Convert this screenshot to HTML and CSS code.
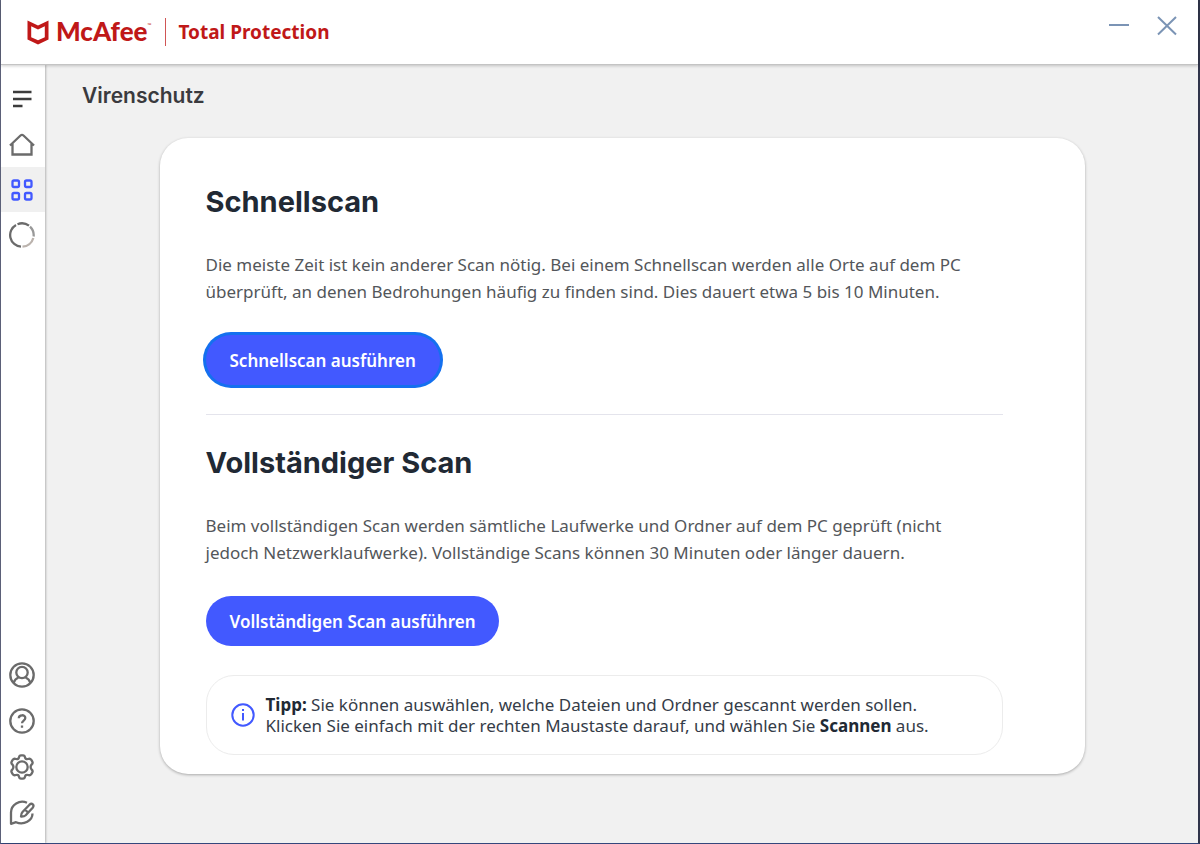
FILE: index.html
```html
<!DOCTYPE html>
<html lang="de">
<head>
    <meta charset="UTF-8">
    <meta name="viewport" content="width=device-width, initial-scale=1.0">
    <title>McAfee Total Protection</title>
    <link rel="stylesheet" href="styles.css">
</head>
<body>
    <div class="window">
        <header class="header">
            <div class="brand">
                <svg class="brand-icon" width="22" height="25" viewBox="0 0 22 25" aria-hidden="true">
                    <path fill="#c01818" d="M.5.500L11 5.500 21.500.5V19.500L11 24.500.5 19.500zM4.200 6.300v11l6.800 3 6.800-3v-11L11 9.500z"/>
                </svg>
                <span class="brand-name">McAfee</span><span class="brand-tm">™</span>
                <span class="product">Total Protection</span>
            </div>
            <div class="window-controls">
                <button type="button" aria-label="Minimieren">
                    <svg width="22" height="22" viewBox="0 0 22 22"><path d="M1 10h20"/></svg>
                </button>
                <button type="button" aria-label="Schließen">
                    <svg width="22" height="22" viewBox="0 0 22 22"><path d="M2 2l18 17.500M20 2L2 19.500"/></svg>
                </button>
            </div>
        </header>

        <div class="content">
            <nav class="sidebar">
                <div class="nav-top">
                    <button type="button" class="nav-item" aria-label="Menü">
                        <svg class="dark" width="26" height="26" viewBox="0 0 26 26"><path d="M4 5h18.500M4 12h18.500M4 19h9.500"/></svg>
                    </button>
                    <a href="#" class="nav-item" aria-label="Startseite">
                        <svg width="28" height="26" viewBox="0 0 28 26"><path d="M2 13.500L12.500 3.500q1.500-1.300 3 0L26 13.500M4.500 11.500v11h19v-11"/></svg>
                    </a>
                    <a href="#" class="nav-item active" aria-label="Mein Schutz">
                        <svg width="26" height="26" viewBox="0 0 26 26">
                            <rect x="3.500" y="3.500" width="6.500" height="6.500" rx="1.500"/>
                            <rect x="16" y="3.500" width="6.500" height="6.500" rx="1.500"/>
                            <rect x="3.500" y="16" width="6.500" height="6.500" rx="1.500"/>
                            <rect x="16" y="16" width="6.500" height="6.500" rx="1.500"/>
                        </svg>
                    </a>
                    <a href="#" class="nav-item" aria-label="Schutzwert">
                        <svg width="26" height="26" viewBox="0 0 26 26">
                            <path d="M8.500 2.200A11.700 11.700 0 0 1 20 3.700"/>
                            <path stroke="#999" d="M21 4.600A11.700 11.700 0 0 1 24.600 14.500"/>
                            <path stroke="#bbb3ad" d="M24.300 16A11.700 11.700 0 0 1 13.500 24.700"/>
                            <path d="M12 24.700A11.700 11.700 0 0 1 7 2.900"/>
                        </svg>
                    </a>
                </div>
                <div class="nav-bottom">
                    <a href="#" class="nav-item" aria-label="Konto">
                        <svg width="26" height="26" viewBox="0 0 26 26">
                            <circle cx="13" cy="13" r="11.700"/>
                            <circle cx="13" cy="10.500" r="5.700"/>
                            <path d="M4.500 21Q6 16.800 9.500 15.500M21.500 21Q20 16.800 16.500 15.500"/>
                        </svg>
                    </a>
                    <a href="#" class="nav-item" aria-label="Hilfe">
                        <svg width="26" height="26" viewBox="0 0 26 26">
                            <circle cx="13" cy="13" r="11.700"/>
                            <path d="M9.800 10.300c0-4 6.500-4 6.500-.2 0 2.500-3.300 2.500-3.300 5.200M13 17.500v2.200"/>
                        </svg>
                    </a>
                    <a href="#" class="nav-item" aria-label="Einstellungen">
                        <svg width="26" height="26" viewBox="0 0 26 26">
                            <circle cx="13" cy="13" r="5.700"/>
                            <path stroke-linejoin="round" d="M10 3.300Q10.300 1.300 12 1.300h2q1.700 0 2 2 .4 2.300 3 1.700 2.200-.8 3.300.8l1 1.800q.9 1.700-.7 2.900-2 2.500 0 5 1.600 1.200.7 2.900l-1 1.800q-1.100 1.600-3.300.8-2.600-.6-3 1.700-.3 2-2 2h-2q-1.700 0-2-2-.4-2.300-3-1.700-2.200.8-3.300-.8l-1-1.800q-.9-1.700.7-2.900 2-2.500 0-5-1.600-1.200-.7-2.900l1-1.800Q4.800 4.200 7 5q2.600.6 3-1.700z"/>
                        </svg>
                    </a>
                    <a href="#" class="nav-item" aria-label="Feedback">
                        <svg width="26" height="26" viewBox="0 0 26 26">
                            <path stroke-linejoin="round" d="M18 2.700C10.500-.5 2 4.500 2 12.500v11.300l5-1.600c8 3.300 16.500-1.700 16.500-8.700"/>
                            <path stroke-linejoin="round" d="M13.500 12l7-7.300c2.500-2.200 5.200.5 3.200 3l-7 7.500c-1.500 1.500-3.500 1.300-4.700 1.300 0-1.500 0-3 1.500-4.500zM16 9.500l3.200 3.200"/>
                        </svg>
                    </a>
                </div>
            </nav>

            <main class="main">
                <h1>Virenschutz</h1>
                <div class="card">
                    <section class="scan">
                        <h2>Schnellscan</h2>
                        <p>Die meiste Zeit ist kein anderer Scan nötig. Bei einem Schnellscan werden alle Orte auf dem PC<br>
                        überprüft, an denen Bedrohungen häufig zu finden sind. Dies dauert etwa 5 bis 10 Minuten.</p>
                        <button type="button" class="scan-btn focused">Schnellscan ausführen</button>
                    </section>
                    <hr>
                    <section class="scan">
                        <h2>Vollständiger Scan</h2>
                        <p>Beim vollständigen Scan werden sämtliche Laufwerke und Ordner auf dem PC geprüft (nicht<br>
                        jedoch Netzwerklaufwerke). Vollständige Scans können 30 Minuten oder länger dauern.</p>
                        <button type="button" class="scan-btn">Vollständigen Scan ausführen</button>
                    </section>
                    <div class="tip">
                        <svg width="24" height="24" viewBox="0 0 24 24" aria-hidden="true">
                            <circle cx="12" cy="12" r="10.700"/>
                            <path d="M12 10v7.500M12 6v2"/>
                        </svg>
                        <div><b>Tipp:</b> Sie können auswählen, welche Dateien und Ordner gescannt werden sollen.<br>
                        Klicken Sie einfach mit der rechten Maustaste darauf, und wählen Sie <b>Scannen</b> aus.</div>
                    </div>
                </div>
            </main>
        </div>
    </div>
</body>
</html>
```
FILE: styles.css
```css
* {
    box-sizing: border-box;
}
body {
    margin: 0;
    font-family: "Noto Sans", "Open Sans", sans-serif;
    font-size: 17px;
    color: #53565a;
    background: #f1f1f1;
}
button {
    font-family: inherit;
    border: none;
    background: none;
    padding: 0;
    cursor: pointer;
}
svg {
    display: block;
    flex-shrink: 0;
    fill: none;
}
.window {
    display: flex;
    flex-direction: column;
    min-height: 100vh;
    border-left: 1px solid #5d627a;
    border-right: 2px solid #30344a;
    border-bottom: 1px solid #34477c;
}

/* Header */
.header {
    display: flex;
    justify-content: space-between;
    height: 65px;
    padding: 0 20px 0 26px;
    background: #fff;
    border-bottom: 1px solid #c4c4c4;
    box-shadow: 0 1px 3px rgba(0, 0, 0, 0.2);
    position: relative;
}
.brand {
    display: flex;
    align-items: center;
    color: #c01818;
}
.brand-icon {
    margin-right: 7px;
}
.brand-name {
    font-family: Lato, sans-serif;
    font-size: 26px;
    font-weight: 900;
    line-height: 28px;
    padding-bottom: 3px;
}
.brand-tm {
    font-size: 5px;
    line-height: 20px;
    align-self: flex-start;
    margin-top: 15px;
}
.product {
    margin-left: 14px;
    padding-left: 12px;
    border-left: 1px solid #d05555;
    font-size: 19px;
    font-weight: 700;
    line-height: 28px;
}
.window-controls {
    display: flex;
    align-items: flex-start;
    gap: 26px;
    padding-top: 15px;
}
.window-controls svg {
    stroke: #7b94b5;
    stroke-width: 2;
}

/* Sidebar */
.content {
    display: flex;
    flex: 1;
}
.sidebar {
    display: flex;
    flex-direction: column;
    justify-content: space-between;
    width: 44px;
    padding: 12px 0 8px;
    background: #fff;
    box-shadow: 1px 0 2px rgba(0, 0, 0, 0.25);
}
.nav-bottom {
    display: grid;
    gap: 1px;
}
.nav-item {
    display: flex;
    align-items: center;
    justify-content: center;
    width: 100%;
    height: 45px;
    padding-right: 2px;
}
.nav-item svg {
    stroke: #6b6b6b;
    stroke-width: 2.3;
}
.nav-item .dark {
    stroke: #3c3c3c;
}
.nav-item.active {
    background: #f0f0f0;
}
.nav-item.active svg {
    stroke: #4259ff;
}

/* Main */
.main {
    flex: 1;
    padding: 16px 36px 69px 37px;
}
h1 {
    margin: 0 0 27px;
    font-family: Inter, sans-serif;
    font-size: 21px;
    font-weight: 600;
    line-height: 30px;
    color: #3a3a3e;
}
.card {
    max-width: 925px;
    margin: 0 auto;
    padding: 43px 82px 19px 46px;
    background: #fff;
    border-radius: 28px;
    box-shadow: 0 1px 3px rgba(0, 0, 0, 0.3);
}
h2 {
    margin: 0;
    font-family: Inter, sans-serif;
    font-size: 29px;
    font-weight: 700;
    line-height: 42px;
    color: #212934;
}
.scan p {
    margin: 28px 0 30px;
    line-height: 27px;
}
.scan-btn {
    display: block;
    height: 50px;
    padding: 0 24px;
    border-radius: 25px;
    background: #4259ff;
    color: #fff;
    font-size: 17px;
    font-weight: 600;
}
.scan-btn.focused {
    box-shadow: 0 0 0 3px #1470ef;
}
hr {
    margin: 29px 0 27px;
    border: none;
    border-top: 1px solid #e4e4ec;
}
.tip {
    display: flex;
    align-items: center;
    gap: 11px;
    margin-top: 29px;
    padding: 18px 24px;
    border: 1px solid #ececec;
    border-radius: 28px;
    line-height: 21px;
    color: #353c48;
}
.tip svg {
    stroke: #4259ff;
    stroke-width: 2;
}
.tip b {
    color: #212934;
}
```
